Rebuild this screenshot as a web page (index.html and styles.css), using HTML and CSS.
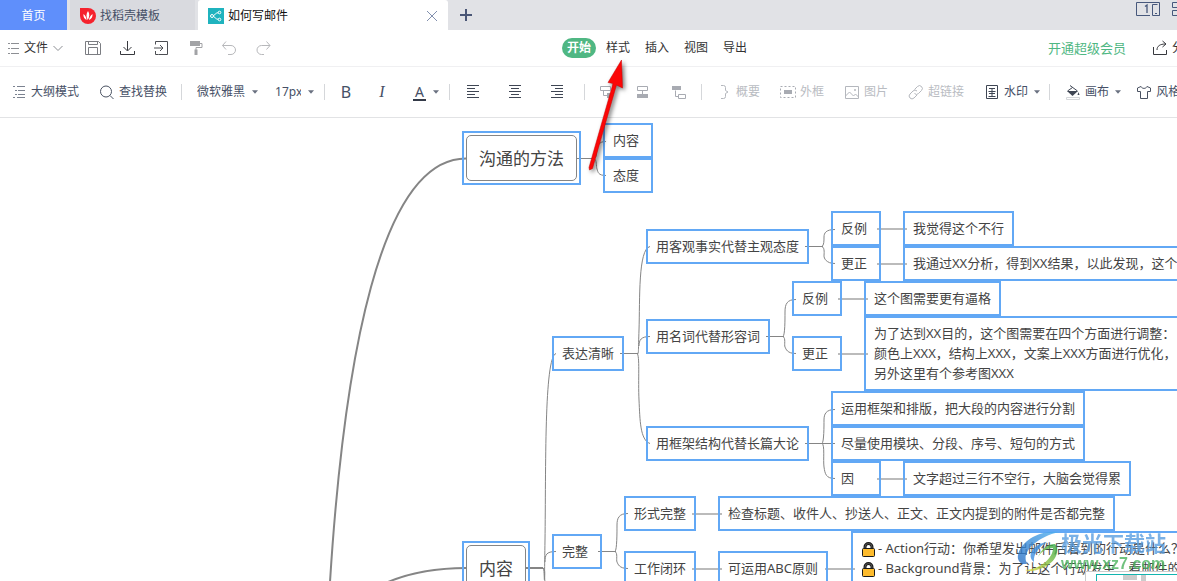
FILE: index.html
```html
<!DOCTYPE html>
<html lang="zh-CN">
<head>
<meta charset="utf-8">
<title>如何写邮件</title>
<link rel="stylesheet" href="styles.css">
</head>
<body>
<header class="tabbar">
  <button class="tab tab-home">首页</button>
  <button class="tab tab-template">
    <svg class="icon" viewBox="0 0 16 16"><path d="M0 0h8a8 8 0 1 1-8 8z" fill="#f5222d"/><path d="M8 3c2 3 1.500 6-.2 9C6 9 6 6 8 3zM3.500 6c2 1.500 3 3.500 3 6-2-1-3.500-3-3-6zM12.500 6c.3 3-1 5-3.500 6 .2-2.500 1.500-4.500 3.500-6z" fill="#fff"/></svg>
    <span>找稻壳模板</span>
  </button>
  <button class="tab tab-current">
    <svg class="icon" viewBox="0 0 16 16"><rect width="16" height="16" fill="#1fb3be"/><path d="M11 4.500C7 4.500 7 8 4 8c3 0 3 3.500 7 3.500" fill="none" stroke="#fff"/><g fill="#1fb3be" stroke="#fff"><circle cx="4" cy="8" r="1.500"/><circle cx="11.500" cy="4.500" r="1.300"/><circle cx="11.500" cy="11.500" r="1.300"/></g></svg>
    <span class="tab-title">如何写邮件</span>
    <svg class="close" viewBox="0 0 12 12"><path d="M1 1l10 10M11 1L1 11" fill="none" stroke="#8290ae"/></svg>
  </button>
  <button class="tab tab-add" aria-label="新建"><svg class="close" viewBox="0 0 12 12"><path d="M6 0v12M0 6h12" fill="none" stroke="#4a5676" stroke-width="2"/></svg></button>
  <div class="window-tools">
    <svg width="24" height="15" viewBox="0 0 24 15"><path d="M14 13.500H.5V.5h23v13h-3M16.500 13.500v-11h5M16.500 13.500h7M19 11.500h2" fill="none" stroke="#47587c"/><path d="M9 4.500l2-1.500v8" fill="none" stroke="#47587c" stroke-width="1.300"/></svg>
    <svg width="14" height="15" viewBox="0 0 14 15"><path d="M.5.5h5v5h-5zM8.500.5h5v5h-5zM.5 8.500h5v5h-5zM8.500 8.500h5v5h-5z" fill="none" stroke="#47587c"/></svg>
  </div>
</header>

<nav class="menubar">
  <div class="menu-left">
    <button class="file-menu">
      <svg class="icon" viewBox="0 0 16 16"><path d="M2 3.500h2M5 3.500h8M2 8.500h2M5 8.500h8M2 13.500h2M5 13.500h8" fill="none" stroke="#8d8f94"/></svg>
      <span>文件</span>
      <svg class="chev" viewBox="0 0 12 12"><path d="M1.500 4L6 8.500 10.500 4" fill="none" stroke="#8d8f94"/></svg>
    </button>
    <div class="quick">
      <button aria-label="保存"><svg class="icon" viewBox="0 0 16 16"><path d="M.5 1.500h13l2 2v11H.5zM3.500 14.500v-7h9v7M3.500 1.500v3h9v-3" fill="none" stroke="#7b7d82"/></svg></button>
      <button aria-label="下载"><svg class="icon" viewBox="0 0 16 16"><path d="M8.500 1v9.500M4.500 7l4 4 4-4M1.500 11v3.500h14V11" fill="none" stroke="#37393e"/></svg></button>
      <button aria-label="输出"><svg class="icon" viewBox="0 0 16 16"><path d="M2.500 4.500v-3h12v13h-9M2.500 11v3.500h3M1 8h9M7 5l3 3-3 3" fill="none" stroke="#4c4e53"/></svg></button>
      <button aria-label="格式刷"><svg class="icon" viewBox="0 0 16 16"><path d="M3 1h10v5H3z" fill="#a2a3a6"/><path d="M13 3.500h2v4H9V11" fill="none" stroke="#a2a3a6"/><path d="M7.500 9.500h3V15h-3z" fill="#a2a3a6"/></svg></button>
      <button aria-label="撤销"><svg class="icon" viewBox="0 0 16 16"><path d="M5 1.500L1.500 5.500 5 9.500M1.500 5.500H10a4.500 4.500 0 0 1 0 9H7" fill="none" stroke="#b7b8bb"/></svg></button>
      <button aria-label="重做"><svg class="icon" viewBox="0 0 16 16"><path d="M11.500 1.500L15 5.500l-3.500 4M15 5.500H6.500a4.500 4.500 0 0 0 0 9H9" fill="none" stroke="#b7b8bb"/></svg></button>
    </div>
  </div>
  <div class="menu-tabs">
    <button class="menu-tab active">开始</button>
    <button class="menu-tab">样式</button>
    <button class="menu-tab">插入</button>
    <button class="menu-tab">视图</button>
    <button class="menu-tab">导出</button>
  </div>
  <div class="menu-right">
    <a class="vip" href="#">开通超级会员</a>
    <button class="tool">
      <svg class="icon" viewBox="0 0 16 16"><path d="M1.500 7v7.500h13V10M5 10c0-4 3-6 8.500-6M10.500 1l3.500 3-3.500 3" fill="none" stroke="#37393e"/></svg>
      <span>分享</span>
    </button>
  </div>
</nav>

<div class="toolbar">
  <div class="group g-view">
    <button class="tool"><svg class="icon" viewBox="0 0 16 16"><path d="M2 2.500h2M6 2.500h8M4 6.500h2M7 6.500h7M4 10.500h2M7 10.500h7M2 13.500h2M6 13.500h8" fill="none" stroke="#7b8290"/></svg><span>大纲模式</span></button>
    <button class="tool"><svg class="icon" viewBox="0 0 16 16"><circle cx="7" cy="7.500" r="5.500" fill="none" stroke="#4a5262"/><path d="M11 11.500l3.500 3.500" stroke="#4a5262"/></svg><span>查找替换</span></button>
  </div>
  <div class="group g-font">
    <label class="pick"><select class="family" aria-label="字体"><option>微软雅黑</option></select><svg class="caret" viewBox="0 0 7 4"><path d="M0 0h7L3.500 4z"/></svg></label>
    <label class="pick"><select class="size" aria-label="字号"><option>17px</option></select><svg class="caret" viewBox="0 0 7 4"><path d="M0 0h7L3.500 4z"/></svg></label>
  </div>
  <div class="group g-style">
    <button class="bold" aria-label="加粗">B</button>
    <button class="italic" aria-label="斜体">I</button>
    <button class="pick" aria-label="文字颜色"><span class="color">A</span><svg class="caret" viewBox="0 0 7 4"><path d="M0 0h7L3.500 4z"/></svg></button>
  </div>
  <div class="group g-align">
    <button aria-label="左对齐"><svg class="align" viewBox="0 0 14 14"><path d="M1 .5h12M1 3.500h8M1 6.500h12M1 9.500h8M1 12.500h12"/></svg></button>
    <button aria-label="居中"><svg class="align" viewBox="0 0 14 14"><path d="M1 .5h12M3 3.500h8M1 6.500h12M3 9.500h8M1 12.500h12"/></svg></button>
    <button aria-label="右对齐"><svg class="align" viewBox="0 0 14 14"><path d="M1 .5h12M5 3.500h8M1 6.500h12M5 9.500h8M1 12.500h12"/></svg></button>
  </div>
  <div class="group g-level">
    <button aria-label="子主题"><svg class="align" viewBox="0 0 14 14"><path d="M.5 1.500h10v4H.5zM3.500 5.500v5h4"/><path d="M7 8h5v5H7z" class="fill"/></svg></button>
    <button aria-label="同级主题"><svg class="align" viewBox="0 0 14 14"><path d="M1.500 1.500h10v4h-10zM6.500 5.500v4"/><path d="M1 9h11v4H1z" class="fill"/></svg></button>
    <button aria-label="父主题"><svg class="align" viewBox="0 0 14 14"><path d="M6.500 9.500h7v4h-7zM3.500 5.500v6h3"/><path d="M0 1h9v4H0z" class="fill"/></svg></button>
  </div>
  <div class="group g-insert">
    <button class="tool" disabled><svg class="icon" viewBox="0 0 16 16"><path d="M5 1.500h2.500a2 2 0 0 1 2 2v3L12 8l-2.500 1.500v3a2 2 0 0 1-2 2H5" fill="none" stroke="#b4b7bd"/></svg><span>概要</span></button>
    <button class="tool" disabled><svg class="icon" viewBox="0 0 16 16"><path d="M.5 2.500h15v11H.5z" fill="none" stroke="#a8abb2" stroke-dasharray="2 2"/><path d="M4 6h8v4H4z" fill="#a8abb2"/></svg><span>外框</span></button>
    <button class="tool" disabled><svg class="icon" viewBox="0 0 16 16"><path d="M1.500 2.500h13v12h-13zM1.500 12l4-4 4 4 2-2 3 3" fill="none" stroke="#b4b7bd"/><circle cx="11" cy="6" r="1" fill="#b4b7bd"/></svg><span>图片</span></button>
    <button class="tool" disabled><svg class="icon" viewBox="0 0 16 16"><path d="M6.500 5.500l3-3a2.800 2.800 0 0 1 4 4l-3 3a2.800 2.800 0 0 1-4 0M9 7a2.800 2.800 0 0 0-4 0L2 10a2.800 2.800 0 0 0 4 4l3-3" fill="none" stroke="#b4b7bd"/></svg><span>超链接</span></button>
    <button class="tool"><svg class="icon" viewBox="0 0 16 16"><path d="M2.500 1.500h11v13h-11zM5 4.500h6M4.500 7.500h7M5 9.500h6M4.500 12.500h7M8 4v8" fill="none" stroke="#3f4654"/></svg><span>水印</span><svg class="caret after" viewBox="0 0 7 4"><path d="M0 0h7L3.500 4z"/></svg></button>
  </div>
  <div class="group g-canvas">
    <button class="tool"><svg class="icon" viewBox="0 0 16 16"><path d="M2 7h11l-5.500 5z" fill="#3f4654"/><path d="M5 1.500l7.500 5.500M7.500 3.500L2.500 7" stroke="#3f4654" fill="none"/><path d="M13.500 8l1 3h-2z" fill="#3f4654"/><path d="M1.500 13.500h13v2h-13z" fill="#fff" stroke="#d5d7da"/></svg><span>画布</span><svg class="caret after" viewBox="0 0 7 4"><path d="M0 0h7L3.500 4z"/></svg></button>
    <button class="tool"><svg class="icon" viewBox="0 0 16 16"><path d="M5 2.500L1.500 4v3.500h3v7h7v-7h3V4L11 2.500C10 5 6 5 5 2.500z" fill="none" stroke="#4a5262"/></svg><span>风格</span></button>
  </div>
</div>

<main class="canvas">
  <svg class="links" width="1177" height="463" viewBox="0 118 1177 463">
    <g class="trunk">
      <path d="M466 158.500C380 158.500 344 360 330 582"/>
      <path d="M388 582C412 572 436 568 466 568"/>
      <path d="M526 568h17"/>
    </g>
    <g class="branch">
      <path d="M577 158.500h17"/>
      <path d="M606 141.500C598 141.500 598 146 597 150S597 157 594 158.500C597 160 596 166 597 169S598 175.500 606 175.500"/>
      <path d="M556 353.500C544 357 546 470 545 540S545 566 543 568C546 570 544 576 545 582"/>
      <path d="M556 551.500C546 551.500 545 555 545 562"/>
      <path d="M620 353.500h18M650 246.500C638 249 640 300 639 330S639 352 637 353.500C640 355 638 380 639 400S640 440 650 443.500M650 336.500C641 336.500 639 340 639 346"/>
      <path d="M805 246.500h18M835 229.500C826 229.500 824 233 824 237S824 245 822 246.500C825 248 824 254 824 256S826 263.500 835 263.500"/>
      <path d="M766 336.500h18M796 299.500C787 299.500 785 304 785 312S785 335 783 336.500C786 338 784 345 785 347S787 353.500 796 353.500"/>
      <path d="M805 443.500h30M835 409.500C826 409.500 824 414 824 420S824 442 822 443.500C825 445 823 460 824 467S826 478.500 835 478.500"/>
      <path d="M598 551.500h18M628 513.500C619 513.500 617 518 617 525S617 550 615 551.500C618 553 616 560 617 562S619 568.500 628 568.500"/>
    </g>
    <g class="single">
      <path d="M877 229h30M877 264h30M838 299h30M838 354h30M877 479h30M692 514h30M692 569h30M825 569h30"/>
    </g>
  </svg>

  <div class="node topic n-method"><span>沟通的方法</span></div>
  <div class="node n-content">内容</div>
  <div class="node n-attitude">态度</div>

  <div class="node n-fact">用客观事实代替主观态度</div>
  <div class="node n-fact-bad">反例</div>
  <div class="node n-fact-good">更正</div>
  <div class="node n-feel">我觉得这个不行</div>
  <div class="node n-analyse">我通过XX分析，得到XX结果，以此发现，这个</div>

  <div class="node n-noun">用名词代替形容词</div>
  <div class="node n-noun-bad">反例</div>
  <div class="node n-noun-good">更正</div>
  <div class="node n-style">这个图需要更有逼格</div>
  <div class="node n-goal">为了达到XX目的，这个图需要在四个方面进行调整：<br>颜色上XXX，结构上XXX，文案上XXX方面进行优化，<br>另外这里有个参考图XXX</div>

  <div class="node n-clear">表达清晰</div>
  <div class="node n-frame">用框架结构代替长篇大论</div>
  <div class="node n-layout">运用框架和排版，把大段的内容进行分割</div>
  <div class="node n-module">尽量使用模块、分段、序号、短句的方式</div>
  <div class="node n-cause">因</div>
  <div class="node n-lines">文字超过三行不空行，大脑会觉得累</div>

  <div class="node topic n-main"><span>内容</span></div>
  <div class="node n-complete">完整</div>
  <div class="node n-form">形式完整</div>
  <div class="node n-check">检查标题、收件人、抄送人、正文、正文内提到的附件是否都完整</div>
  <div class="node n-loop">工作闭环</div>
  <div class="node n-abc">可运用ABC原则</div>
  <div class="node n-action">
    <svg class="lock" viewBox="0 0 15 16"><path d="M4 8V6a3.500 3.500 0 0 1 7 0v2" fill="none" stroke="#1b1b1b" stroke-width="3"/><path d="M4 8V6a3.500 3.500 0 0 1 7 0v2" fill="none" stroke="#777" stroke-width=".6"/><rect x="1.500" y="7.500" width="12" height="8" rx="1" fill="#fdbb2c" stroke="#1b1b1b"/></svg>- Action行动：你希望发出邮件后看到的行动是什么？<br>
    <svg class="lock" viewBox="0 0 15 16"><path d="M4 8V6a3.500 3.500 0 0 1 7 0v2" fill="none" stroke="#1b1b1b" stroke-width="3"/><path d="M4 8V6a3.500 3.500 0 0 1 7 0v2" fill="none" stroke="#777" stroke-width=".6"/><rect x="1.500" y="7.500" width="12" height="8" rx="1" fill="#fdbb2c" stroke="#1b1b1b"/></svg>- Background背景：为了让这个行动发生，看邮件的
  </div>

  <div class="watermark">
    <svg width="44" height="42" viewBox="0 0 44 42">
      <defs>
        <linearGradient id="blue" x1="0" y1="1" x2="1" y2="0"><stop offset="0" stop-color="#2a6fc4"/><stop offset="1" stop-color="#4fb0f0"/></linearGradient>
        <linearGradient id="green" x1="0" y1="1" x2="1" y2="0"><stop offset="0" stop-color="#e3d93c"/><stop offset="1" stop-color="#2fa84a"/></linearGradient>
      </defs>
      <path d="M42 1C22-1 4 10 1 24c-1 5 2 9 7 9 3 0 2-1 1-3C6 20 20 6 42 1z" fill="url(#blue)"/>
      <path d="M38 13c6 8 0 23-23 27-3 0-5 0-7-1 16-1 28-12 28-22-7 0-12 4-15 9 3-7 9-13 17-13z" fill="url(#green)"/>
      <path d="M17 31c-8-6-1-18 13-20-8 5-14 12-13 20z" fill="#3d8fe0"/>
    </svg>
    <div class="mark-text"><span class="mark-name">极光下载站</span><span class="mark-url">www.xz7.com</span></div>
  </div>
  <div class="minimap"><div class="minimap-view"><i></i><b></b></div></div>
</main>

<svg class="pointer" width="50" height="120" viewBox="584 54 50 120">
  <path d="M589.500 170L592.500 168.500 616.500 85 622.500 88 621.500 60 608 82.500 613 83.500 589 167.500z" fill="#fb0606" stroke="#c80000" stroke-width=".5"/>
</svg>
</body>
</html>
```
FILE: styles.css
```css
* { box-sizing: border-box; }

body {
  margin: 0;
  height: 100vh;
  display: flex;
  flex-direction: column;
  overflow: hidden;
  position: relative;
  background: #fff;
  color: #465066;
  font: 12px/20px "Noto Sans", "Noto Sans CJK SC", sans-serif;
}

button, select {
  margin: 0;
  padding: 0;
  border: 0;
  background: none;
  color: inherit;
  font: inherit;
  flex: none;
}
button { display: flex; align-items: center; white-space: nowrap; }
svg { display: block; flex: none; }
.icon { width: 16px; height: 16px; }

/* Document tabs */
.tabbar { display: flex; height: 30px; flex: none; background: #e1e2e6; }
.tab { height: 30px; padding-top: 2px; }
.tab-home { width: 67px; justify-content: center; background: #5f8ffb; color: #fff; }
.tab-template {
  width: 128px;
  margin-left: 3px;
  padding-left: 10px;
  gap: 4px;
  background: #d9dadf;
  border-right: 3px solid #e1e2e6;
}
.tab-current { width: 250px; padding: 2px 10px 0; gap: 4px; background: #fff; color: #111; border-radius: 3px 3px 0 0; }
.tab-title { flex: 1; text-align: left; }
.close { width: 12px; height: 12px; }
.tab-add { padding: 0 12px; }
.window-tools { display: flex; gap: 12px; margin: 2px -9px 0 auto; }

/* Menu row */
.menubar {
  display: grid;
  grid-template-columns: 562px 1fr auto;
  align-items: center;
  height: 37px;
  flex: none;
  border-bottom: 1px solid #f0f0f2;
  color: #333;
}
.menu-left { display: flex; align-items: center; padding-left: 6px; gap: 21px; }
.file-menu { gap: 2px; }
.chev { width: 12px; height: 12px; margin-left: 2px; }
.quick { display: flex; gap: 18px; }
.menu-tabs { display: flex; gap: 5px; }
.menu-tab { height: 20px; padding: 0 5px; border-radius: 10px; }
.menu-tab.active { background: #4fb783; color: #fff; font-weight: 700; }
.menu-right { display: flex; align-items: center; gap: 26px; margin-right: -19px; }
.vip { color: #4fb783; font-size: 13px; text-decoration: none; white-space: nowrap; }

/* Format toolbar */
.toolbar {
  display: flex;
  align-items: center;
  height: 51px;
  flex: none;
  border-bottom: 1px solid #e2e3e5;
}
.group { display: flex; align-items: center; height: 16px; flex: none; }
.group + .group { border-left: 1px solid #d5d7da; }
.tool { gap: 4px; }
.tool:disabled { color: #b9bcc2; }
.caret { width: 6px; height: 4px; fill: #6a7180; }
.after { margin-left: 2px; }
.pick { display: flex; align-items: center; gap: 7px; }
.pick select { appearance: none; outline: 0; }
.family { width: 48px; }
.size { width: 26px; }
.g-view { padding: 0 14px 0 11px; gap: 20px; }
.g-font { padding: 0 10px 0 15px; gap: 17px; }
.g-style { padding: 0 10px 0 16px; gap: 27px; }
.g-align { padding: 0 20px 0 16px; gap: 28px; }
.g-level { padding: 0 15px; gap: 22px; }
.g-insert { padding: 0 9px 0 14px; gap: 20px; }
.g-canvas { padding-left: 15px; gap: 15px; }
.bold, .italic { width: 10px; justify-content: center; font-size: 16px; }
.italic { width: 8px; font-family: "Liberation Serif", serif; font-style: italic; }
.color { width: 13px; border-bottom: 2px solid #333a48; font-size: 14px; line-height: 15px; text-align: center; }
.align { width: 14px; height: 14px; fill: none; stroke: #3f4654; }
.g-level .align { stroke: #a8abb2; }
.g-level .fill { fill: #a8abb2; stroke: none; }

/* Mind map */
.canvas { position: relative; flex: 1; min-height: 0; overflow: hidden; }
.links { position: absolute; left: 0; top: 0; fill: none; }
.trunk { stroke: #858585; stroke-width: 2; }
.branch { stroke: #858585; stroke-width: 1; }
.single { stroke: #bbb; stroke-width: 2; }

.node {
  position: absolute;
  padding: 5px 8px 6px;
  border: 2px solid #62a8f5;
  color: #444;
  font-size: 13px;
  line-height: 20px;
  white-space: nowrap;
}
.topic { padding: 2px; font-size: 17px; }
.topic span {
  display: block;
  padding: 13px 12px 11px;
  border: 1px solid #858585;
  border-radius: 5px;
}

.n-method { left: 462px; top: 13px; }
.n-content { left: 603px; top: 5px; }
.n-attitude { left: 603px; top: 40px; }
.n-fact { left: 646px; top: 111px; }
.n-fact-bad { left: 831px; top: 93px; }
.n-fact-good { left: 831px; top: 128px; }
.n-feel { left: 903px; top: 93px; }
.n-analyse { left: 903px; top: 128px; right: -20px; }
.n-noun { left: 646px; top: 201px; }
.n-noun-bad { left: 792px; top: 163px; }
.n-noun-good { left: 792px; top: 218px; }
.n-style { left: 864px; top: 163px; }
.n-goal { left: 864px; top: 198px; right: -20px; }
.n-clear { left: 552px; top: 218px; }
.n-frame { left: 646px; top: 308px; }
.n-layout { left: 831px; top: 273px; }
.n-module { left: 831px; top: 308px; }
.n-cause { left: 831px; top: 343px; width: 50px; }
.n-lines { left: 903px; top: 343px; }
.n-main { left: 462px; top: 423px; }
.n-complete { left: 552px; top: 416px; }
.n-form { left: 624px; top: 378px; }
.n-check { left: 718px; top: 378px; }
.n-loop { left: 624px; top: 433px; }
.n-abc { left: 718px; top: 433px; }
.n-action { left: 851px; top: 413px; right: -20px; height: 75px; }
.n-content, .n-attitude,
.n-fact-bad, .n-fact-good,
.n-noun-bad, .n-noun-good, .n-complete { width: 50px; }

.lock { display: inline-block; width: 15px; height: 16px; margin-right: 2px; vertical-align: -4px; }

.watermark {
  position: absolute;
  left: 1017px;
  top: 413px;
  display: flex;
  opacity: .8;
}
.mark-text { display: flex; flex-direction: column; font-weight: 700; white-space: nowrap; }
.mark-name { color: #5a9ee0; font-size: 21px; line-height: 24px; }
.mark-url { color: #4db35f; font: 700 16px/18px "Liberation Sans", sans-serif; }

.minimap {
  position: absolute;
  left: 1085px;
  top: 453px;
  right: -20px;
  height: 60px;
  padding: 2px 10px;
  background: #fff;
  border: 1px solid #ccc;
}
.minimap-view { display: flex; gap: 4px; height: 50px; padding-left: 26px; border: 1px solid #12b5b0; }
.minimap-view i { width: 14px; height: 5px; background: #ccc; }
.minimap-view b { width: 5px; height: 6px; background: #ccc; }

.pointer { position: absolute; left: 584px; top: 54px; filter: drop-shadow(2px 2px 2px #0008); pointer-events: none; }
```
